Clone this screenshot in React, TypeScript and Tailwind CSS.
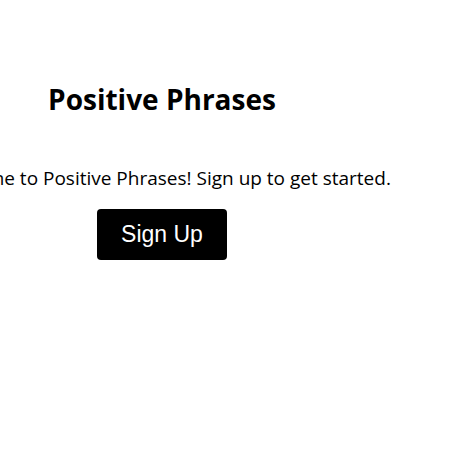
export default function App() {
  return (
    <div className="w-[324px] flex flex-col items-center pt-[80px] font-['Open_Sans',sans-serif] text-black">
      <h1 className="text-[28px] font-bold leading-[38px] whitespace-nowrap">Positive Phrases</h1>
      <p className="mt-[47px] text-[19px] leading-[26px] whitespace-nowrap">
        Welcome to Positive Phrases! Sign up to get started.
      </p>
      <button className="mt-[18px] w-[130px] h-[51px] rounded-[4px] bg-black text-white text-[23px] font-['Liberation_Sans',Arial,sans-serif]">
        Sign Up
      </button>
    </div>
  );
}
